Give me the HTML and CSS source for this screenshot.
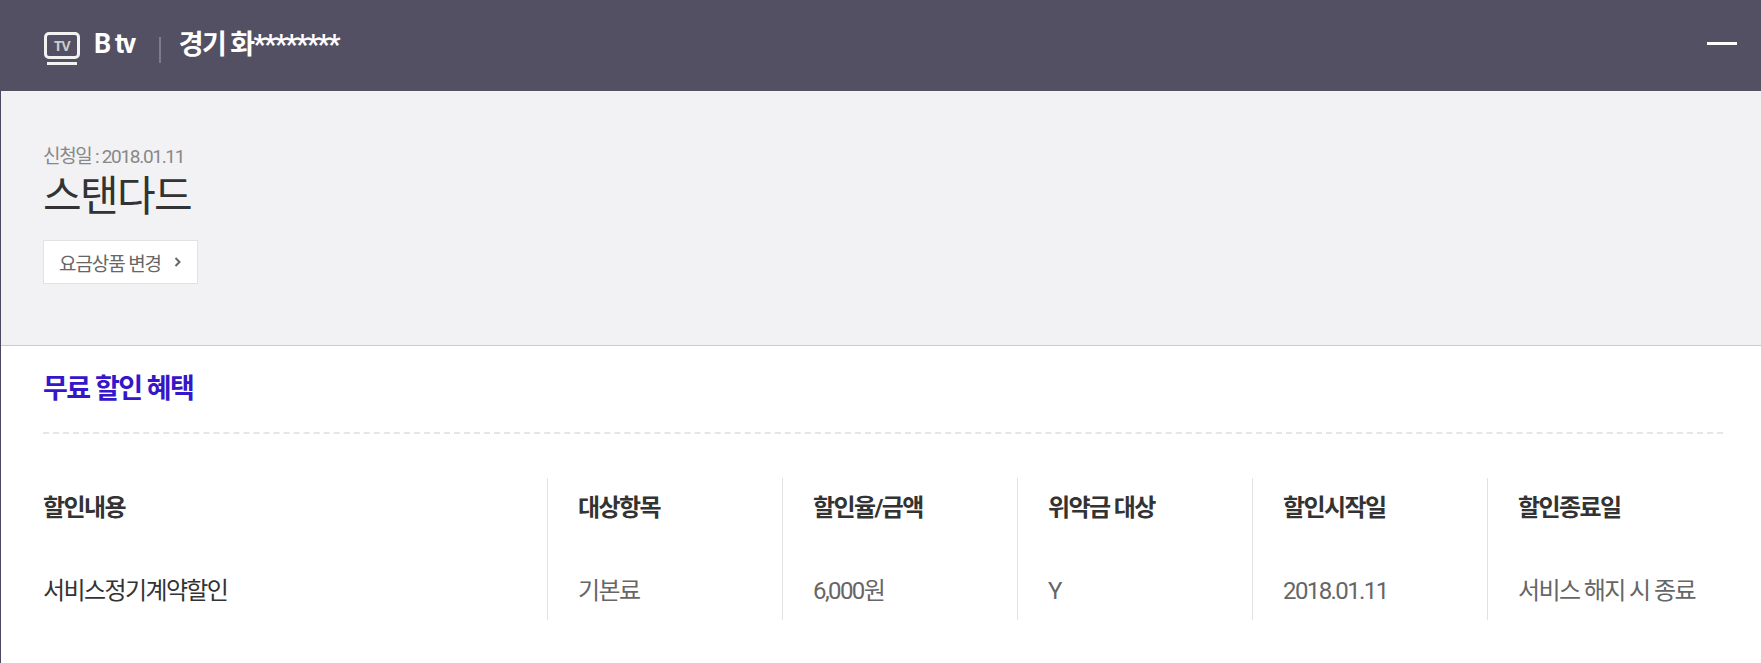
FILE: index.html
```html
<!DOCTYPE html>
<html lang="ko">
<head>
<meta charset="utf-8">
<title>B tv</title>
<link rel="stylesheet" href="styles.css">
</head>
<body>
<div class="panel">
  <header class="top">
    <svg class="tv" width="36" height="34" viewBox="0 0 36 34" aria-hidden="true">
      <rect x="1.5" y="1.5" width="33" height="24" rx="3.5" fill="none" stroke="#f2f2f2" stroke-width="3"/>
      <rect x="3" y="30" width="30" height="3" fill="#f2f2f2"/>
      <text x="18" y="18.5" class="tv-label" text-anchor="middle">TV</text>
    </svg>
    <span class="brand">B tv</span>
    <span class="sep"></span>
    <span class="owner">경기 화********</span>
    <span class="dash"></span>
  </header>
  <section class="plan">
    <p class="date">신청일 : 2018.01.11</p>
    <h1 class="name">스탠다드</h1>
    <a class="change">요금상품 변경
      <svg class="chev" width="8" height="12" viewBox="0 0 8 12" aria-hidden="true"><path d="M1.5 2l4 4-4 4" fill="none" stroke="#666" stroke-width="2"/></svg>
    </a>
  </section>
  <section class="benefit">
    <h2 class="title">무료 할인 혜택</h2>
    <div class="table">
      <div class="col first"><b>할인내용</b><span class="dark">서비스정기계약할인</span></div>
      <div class="col"><b>대상항목</b><span>기본료</span></div>
      <div class="col"><b>할인율/금액</b><span>6,000원</span></div>
      <div class="col"><b>위약금 대상</b><span>Y</span></div>
      <div class="col"><b>할인시작일</b><span>2018.01.11</span></div>
      <div class="col"><b>할인종료일</b><span>서비스 해지 시 종료</span></div>
    </div>
  </section>
</div>
</body>
</html>
```
FILE: styles.css
```css
* { box-sizing: border-box; }
html, body { margin: 0; padding: 0; }
body {
  background: #fff;
  font-family: Roboto, "Noto Sans CJK KR", "Noto Sans", sans-serif;
  color: #333;
  height: 663px;
  overflow: hidden;
}
.panel { border-left: 1px solid #4a4862; min-height: 663px; }
.top {
  height: 91px;
  margin-left: -1px;
  background: #535064;
  display: flex;
  align-items: center;
  padding: 0 24px 0 44px;
  color: #fff;
}
.tv { flex: none; margin-top: 7px; }
.tv-label { font: 700 14px "Noto Sans", sans-serif; fill: #ccc; letter-spacing: -.5px; }
.brand { margin-left: 14px; font-size: 27px; font-weight: 700; letter-spacing: -1.5px; margin-top: -4px; }
.sep { width: 2px; height: 26px; background: #7d7b8c; margin: 8px 18px 0 24px; }
.owner { font-size: 27px; font-weight: 700; letter-spacing: -1.6px; margin-top: -6px; }
.dash { width: 30px; height: 3px; background: #fff; margin-left: auto; margin-top: -4px; }
.plan {
  height: 255px;
  background: #f2f2f5;
  border-bottom: 1px solid #ccc;
  padding: 53px 42px 0;
}
.date { margin: 0; font-size: 19px; line-height: 25px; color: #888; letter-spacing: -1.3px; }
.name { margin: 3px 0 0; font-size: 42px; font-weight: 400; line-height: 50px; color: #333; letter-spacing: -1.6px; }
.change {
  display: inline-flex;
  align-items: center;
  gap: 13px;
  width: 155px;
  margin-top: 18px;
  height: 44px;
  padding: 0 14px 0 15px;
  background: #fff;
  border: 1px solid #e2e2e2;
  font-size: 19px;
  color: #666;
  letter-spacing: -1.1px;
  white-space: nowrap;
}
.chev { flex: none; }
.benefit { padding: 0 38px 0 42px; }
.title {
  margin: 0;
  height: 88px;
  padding-top: 26px;
  font-size: 27px;
  line-height: 34px;
  font-weight: 700;
  color: #3516c8;
  letter-spacing: -1.5px;
  border-bottom: 2px dashed #e6e6e6;
}
.table { display: grid; grid-template-columns: 504px repeat(5, 235px); margin-top: 44px; }
.col {
  height: 142px;
  border-left: 1px solid #e2e2e2;
  padding-left: 30px;
  display: flex;
  flex-direction: column;
}
.col.first { border-left: 0; padding-left: 0; }
.col b { font-size: 24px; line-height: 30px; font-weight: 700; color: #333; margin-top: 15px; letter-spacing: -1.6px; white-space: nowrap; }
.col span { font-size: 24px; line-height: 30px; color: #666; margin-top: 53px; letter-spacing: -1.6px; white-space: nowrap; }
.col span.dark { color: #333; }
```
